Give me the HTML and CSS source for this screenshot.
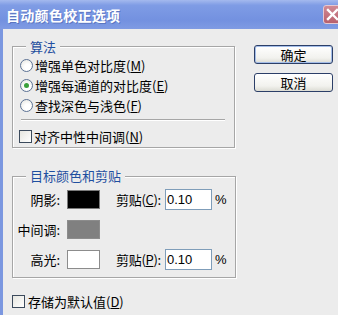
FILE: index.html
```html
<!DOCTYPE html>
<html lang="zh-CN">
<head>
  <meta charset="UTF-8" />
  <title>自动颜色校正选项</title>
  <link rel="stylesheet" href="styles.css">
</head>
<body>
  <div class="window">
    <div class="titlebar">
      <span class="title">自动颜色校正选项</span>
      <span class="close">
        <svg width="13" height="13" viewBox="0 0 13 13"><path d="M2 2 L11 11 M11 2 L2 11" stroke="#fff" stroke-width="2.4" stroke-linecap="square"/></svg>
      </span>
    </div>

    <div class="client">
      <div class="main">
        <div class="group algo">
          <div class="legend">算法</div>
          <label class="opt"><span class="radio"></span>增强单色对比度(<u>M</u>)</label>
          <label class="opt"><span class="radio on"></span>增强每通道的对比度(<u>E</u>)</label>
          <label class="opt"><span class="radio"></span>查找深色与浅色(<u>F</u>)</label>
          <div class="sep"></div>
          <label class="opt"><span class="check"></span>对齐中性中间调(<u>N</u>)</label>
        </div>

        <div class="group target">
          <div class="legend">目标颜色和剪贴</div>
          <div class="row">
            <span class="lbl">阴影:</span>
            <span class="swatch black"></span>
            <span class="clip">剪贴(<u>C</u>):</span>
            <span class="field">0.10</span>
            <span class="pct">%</span>
          </div>
          <div class="row">
            <span class="lbl">中间调:</span>
            <span class="swatch gray"></span>
          </div>
          <div class="row">
            <span class="lbl">高光:</span>
            <span class="swatch white"></span>
            <span class="clip">剪贴(<u>P</u>):</span>
            <span class="field">0.10</span>
            <span class="pct">%</span>
          </div>
        </div>

        <label class="opt save"><span class="check"></span>存储为默认值(<u>D</u>)</label>
      </div>

      <div class="buttons">
        <button class="btn default">确定</button>
        <button class="btn">取消</button>
      </div>
    </div>
  </div>
</body>
</html>
```

FILE: styles.css
```css
body {
  margin: 0;
  font-family: "Noto Sans CJK SC", "Liberation Sans", sans-serif;
  font-size: 13px;
  color: #000;
  background: #ececec;
}
.window {
  width: 338px;
  height: 315px;
  overflow: hidden;
  display: flex;
  flex-direction: column;
}
.titlebar {
  height: 29px;
  flex: none;
  display: flex;
  align-items: center;
  justify-content: space-between;
  background: linear-gradient(to bottom, #a4b9ee 0%, #7f9ce5 18%, #7391e0 70%, #7f9be3 100%);
  padding-left: 6px;
}
.title {
  color: #fff;
  font-size: 14px;
  font-weight: bold;
  letter-spacing: 0.3px;
  text-shadow: 1px 1px 0 rgba(40, 60, 130, 0.35);
}
.close {
  width: 21px;
  height: 19px;
  margin-right: -6px;
  box-sizing: border-box;
  border: 1px solid #e6c8d0;
  border-radius: 3px;
  background: linear-gradient(to bottom, #d08a94, #b8606d);
  display: flex;
  align-items: center;
  justify-content: center;
  padding-right: 3px;
}
.client {
  flex: 1;
  display: flex;
  border-left: 3px solid #7b97e0;
  padding-left: 9px;
}
.main {
  width: 224px;
  flex: none;
  display: flex;
  flex-direction: column;
}
.group {
  display: flex;
  flex-direction: column;
  box-sizing: border-box;
  border: 1px solid #a6a6a6;
  box-shadow: inset 1px 1px 0 #fff, 1px 1px 0 #fff;
}
.legend {
  align-self: flex-start;
  margin: -9px 0 0 13px;
  padding: 0 4px;
  background: #ececec;
  color: #1f4fa0;
  line-height: 16px;
}
.algo {
  width: 223px;
  height: 102px;
  margin-top: 17px;
  padding-top: 1px;
}
.opt {
  display: flex;
  align-items: center;
  height: 20px;
  flex: none;
  white-space: nowrap;
}
.radio {
  width: 11px;
  height: 11px;
  border: 1px solid #5c7294;
  border-radius: 50%;
  background: radial-gradient(circle at 60% 65%, #fff 30%, #e2e2dc 100%);
  margin: 0 2px 0 7px;
  display: flex;
  align-items: center;
  justify-content: center;
}
.radio.on::after {
  content: "";
  width: 5px;
  height: 5px;
  border-radius: 50%;
  background: #3aa03a;
}
.check {
  width: 11px;
  height: 11px;
  border: 1px solid #3b4a5c;
  background: linear-gradient(135deg, #e6e6e0, #fff);
  margin: 0 2px 0 6px;
}
.sep {
  height: 0;
  border-top: 1px solid #a6a6a6;
  border-bottom: 1px solid #fff;
  margin: 4px 9px 5px 8px;
}
.target {
  width: 224px;
  height: 102px;
  margin-top: 28px;
}
.row {
  display: flex;
  align-items: center;
  height: 30px;
  flex: none;
  white-space: nowrap;
}
.lbl {
  width: 47px;
  text-align: right;
}
.swatch {
  width: 33px;
  height: 19px;
  box-sizing: border-box;
  border: 1px solid #8c8c8c;
  margin-left: 7px;
}
.black { background: #000; border-color: #7a7a7a; }
.gray { background: #808080; }
.white { background: #fff; }
.clip {
  width: 45px;
  margin-left: 16px;
  letter-spacing: -0.3px;
}
.field {
  margin-left: 4px;
  width: 47px;
  height: 21px;
  box-sizing: border-box;
  border: 1px solid #7f9db9;
  background: #fff;
  padding-left: 1px;
  line-height: 19px;
  font-family: "Liberation Sans", sans-serif;
  font-size: 13px;
}
.pct {
  margin-left: 3px;
  font-family: "Liberation Sans", sans-serif;
  font-size: 13px;
}
.save {
  margin-top: 13px;
}
.save .check {
  margin-left: 0;
  margin-right: 3px;
}
.buttons {
  margin-left: 18px;
  padding-top: 16px;
  display: flex;
  flex-direction: column;
  gap: 9px;
}
.btn {
  width: 79px;
  height: 19px;
  padding: 0;
  font-family: inherit;
  font-size: 13px;
  line-height: 17px;
  color: #000;
  border: 1px solid #2c3f68;
  border-radius: 3px;
  background: linear-gradient(to bottom, #ffffff 0%, #f2f2ee 70%, #dcdcd4 100%);
}
.btn.default {
  box-shadow: inset 0 0 0 1px #a4bde8;
}
```
